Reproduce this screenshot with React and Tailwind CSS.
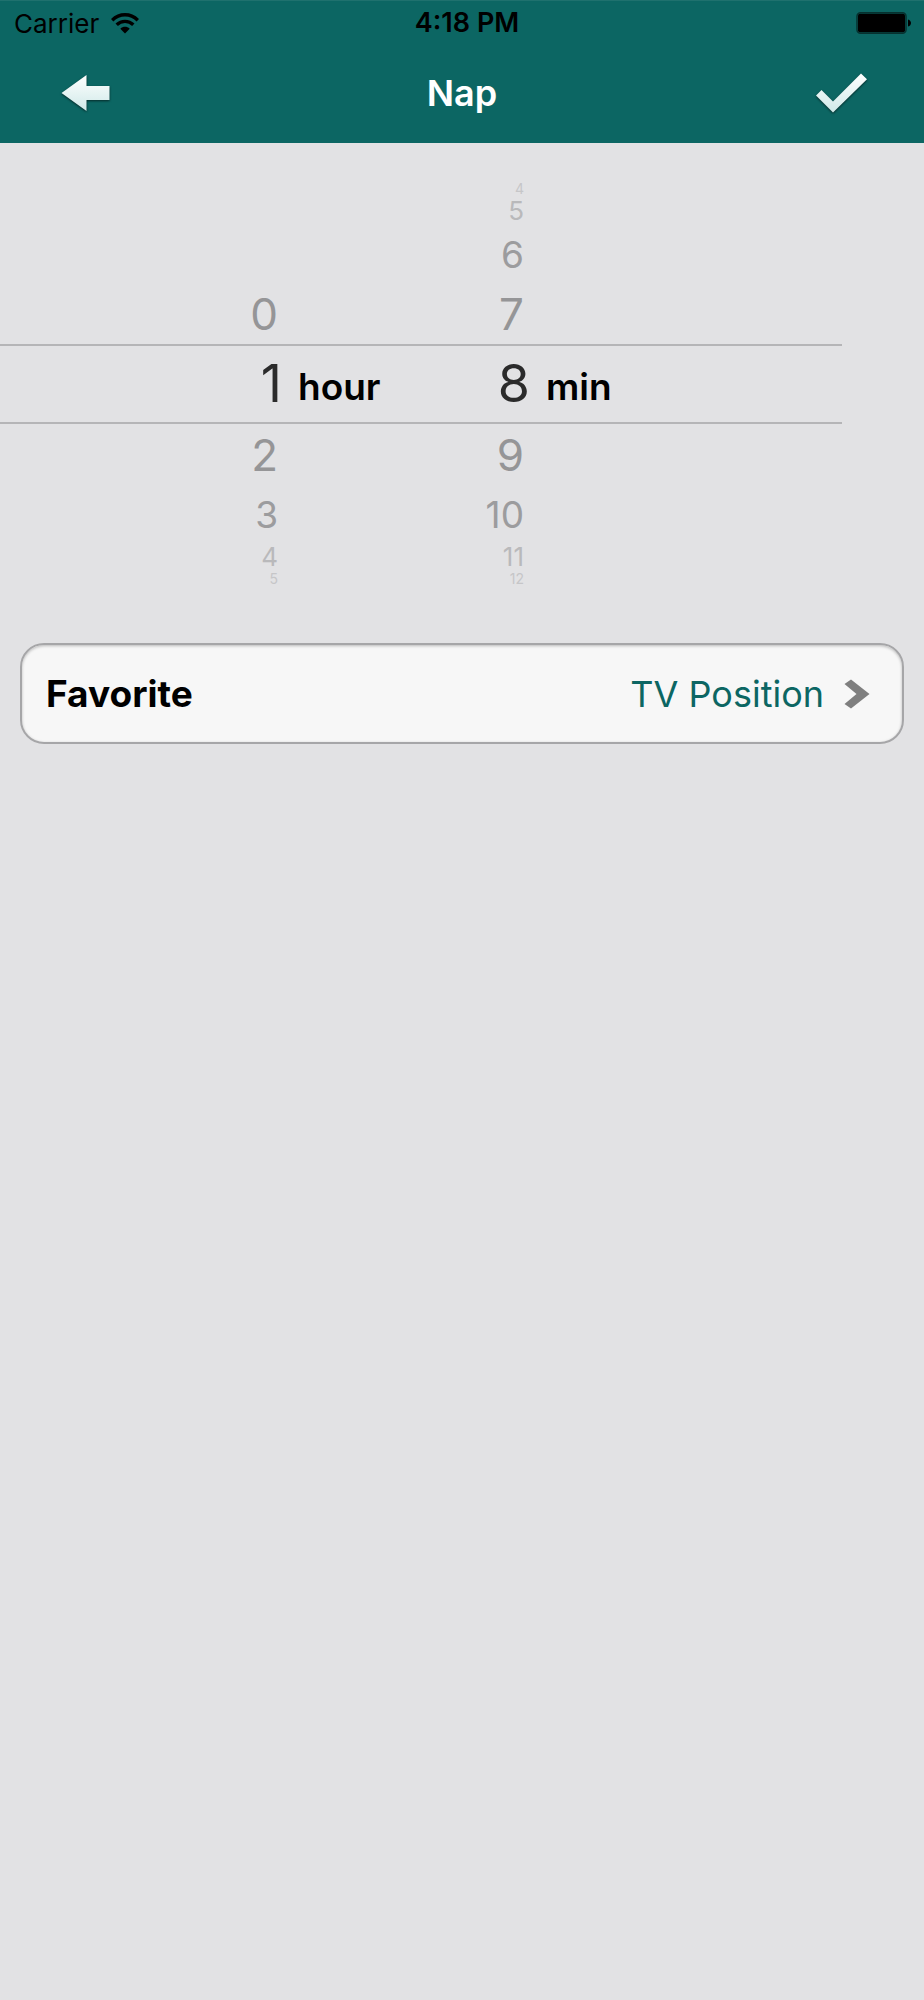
import { useState } from 'react';
import cn from 'clsx';

const OFFSETS = [-4, -3, -2, -1, 0, 1, 2, 3, 4];

// Rows get shorter and fainter as the wheel turns away from the centre
const ROW_STYLES = [
  'h-20 text-[52px] text-[#2b2b2b] border-y-2 border-[#b5b5b7]',
  'h-[61px] text-[44px] text-[#959597]',
  'h-[58px] text-[37px] text-[#9c9c9e]',
  'h-7 text-[26px] text-[#b9b9bb]',
  'h-4 text-[14px] text-[#c6c6c8]',
];

const StatusBar = () => (
  <div className="grid grid-cols-3 items-center h-11 pl-3.5 pr-3 text-[26px] text-black">
    <div className="flex items-center gap-3">
      <span>Carrier</span>
      <svg width="28" height="21" viewBox="0 0 28 21" fill="none" stroke="currentColor" strokeWidth="3.4" aria-hidden="true">
        <path d="M1.2 7.2C8.5 0 19.5 0 26.8 7.2" />
        <path d="M5.7 11.7C10.3 7.2 17.7 7.2 22.3 11.7" />
        <path d="M14 20.5L9.3 15.8C12 13.2 16 13.2 18.7 15.8Z" fill="currentColor" stroke="none" />
      </svg>
    </div>
    <span className="pl-2 text-center text-[27px] font-semibold">4:18 PM</span>
    <svg className="justify-self-end" width="56" height="22" viewBox="0 0 56 22" aria-hidden="true">
      <rect x="1" y="0.8" width="49" height="20.4" rx="3.5" fill="none" stroke="#06312f" strokeWidth="1.5" />
      <rect x="2" y="1.8" width="47" height="18.4" rx="2" />
      <path d="M52 7.5C56 8.5 56 13.5 52 14.5Z" />
    </svg>
  </div>
);

const NavBar = () => (
  <div className="grid grid-cols-3 items-center h-[98px] pb-0.5 px-12">
    <button type="button" aria-label="Back" className="justify-self-start p-3 cursor-pointer">
      <svg width="50" height="38" viewBox="0 0 50 38" className="drop-shadow-[0_1px_1px_rgba(0,0,0,0.6)]">
        <defs>
          <linearGradient id="arrow" x1="0" y1="0" x2="0" y2="1">
            <stop offset="0" stopColor="#fff" />
            <stop offset="1" stopColor="#cfe9e8" />
          </linearGradient>
        </defs>
        <path d="M1.5 19L26.5 1V12H49.5V26H26.5V37Z" fill="url(#arrow)" />
      </svg>
    </button>
    <h1 className="text-center text-[36px] font-semibold text-white">Nap</h1>
    <button type="button" aria-label="Save" className="justify-self-end px-2 py-3 cursor-pointer">
      <svg width="53" height="41" viewBox="0 0 53 41" className="drop-shadow-[0_1px_1px_rgba(0,0,0,0.6)]">
        <defs>
          <linearGradient id="check" x1="0" y1="0" x2="0" y2="1">
            <stop offset="0" stopColor="#fff" />
            <stop offset="1" stopColor="#cfe9e8" />
          </linearGradient>
        </defs>
        <path d="M1 22.500L6.500 17L18 28.500L46 0.500L52 6.300L18 39.500Z" fill="url(#check)" />
      </svg>
    </button>
  </div>
);

const WheelValue = ({ value, max, selected, onSelect, className }) => {
  if (value < 0 || value > max) return <span />;
  return (
    <button
      type="button"
      aria-pressed={selected}
      onClick={() => onSelect(value)}
      className={cn('text-right cursor-pointer', !selected && className)}
    >
      {value}
    </button>
  );
};

const UnitLabel = ({ children }) => (
  <span className="pl-4 pt-1 text-[37px] font-semibold text-black">{children}</span>
);

const DurationPicker = () => {
  const [hours, setHours] = useState(1);
  const [minutes, setMinutes] = useState(8);

  return (
    <section aria-label="Duration" className="pt-[38px] mr-[82px]">
      {OFFSETS.map((offset) => (
        <div
          key={offset}
          className={cn(
            'grid grid-cols-[282fr_110fr_138fr_312fr] items-center leading-none',
            ROW_STYLES[Math.abs(offset)]
          )}
        >
          <WheelValue
            value={hours + offset}
            max={23}
            selected={offset === 0}
            onSelect={setHours}
            className="pr-1"
          />
          <UnitLabel>{offset === 0 && 'hour'}</UnitLabel>
          <WheelValue
            value={minutes + offset}
            max={59}
            selected={offset === 0}
            onSelect={setMinutes}
            className="pr-1.5"
          />
          <UnitLabel>{offset === 0 && 'min'}</UnitLabel>
        </div>
      ))}
    </section>
  );
};

const FavoriteRow = () => (
  <button
    type="button"
    className="flex items-center justify-between h-[101px] mx-5 mt-14 pl-6 pr-8 rounded-3xl border-2 border-[#a6a6a8] bg-[#f7f7f7] shadow-[inset_0_1px_3px_rgba(0,0,0,0.25)] text-[36px] cursor-pointer"
  >
    <span className="text-[37px] font-bold text-black">Favorite</span>
    <span className="flex items-center gap-5 text-[#0c6663]">
      TV Position
      <svg width="26" height="30" viewBox="0 0 26 30" aria-hidden="true">
        <path d="M7 0.5L25.5 15L7 29.5L0.5 25L12.5 15L0.5 5Z" fill="#7f7f7f" />
      </svg>
    </span>
  </button>
);

const App = () => (
  <div className="flex flex-col min-h-screen bg-[#e2e2e4] font-['Inter','Liberation_Sans',sans-serif]">
    <header className="bg-[#0c6663] border-t border-[#1f716e]">
      <StatusBar />
      <NavBar />
    </header>
    <DurationPicker />
    <FavoriteRow />
  </div>
);

export default App;
